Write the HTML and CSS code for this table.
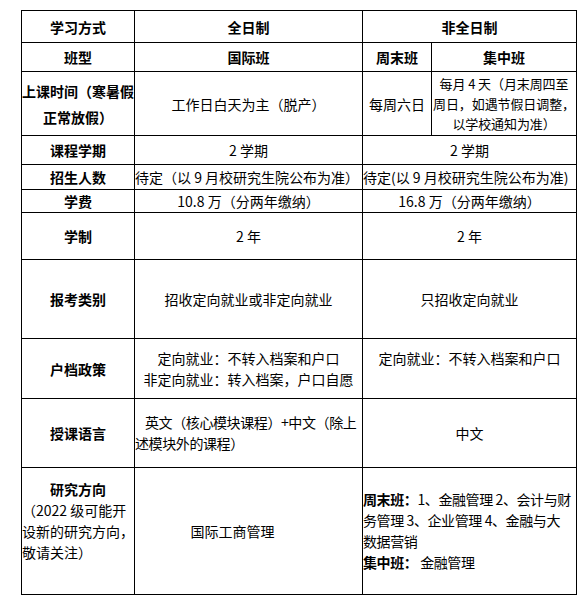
FILE: index.html
```html
<!DOCTYPE html>
<html lang="zh-CN">
<head>
<meta charset="utf-8">
<title>学习方式</title>
<link rel="stylesheet" href="styles.css">
</head>
<body>
<table class="plan">
  <colgroup>
    <col class="c-label">
    <col class="c-full">
    <col class="c-weekend">
    <col class="c-intensive">
  </colgroup>
  <tr class="h32">
    <td class="head">学习方式</td>
    <td class="head">全日制</td>
    <td class="head" colspan="2">非全日制</td>
  </tr>
  <tr class="h29">
    <td class="head">班型</td>
    <td class="head">国际班</td>
    <td class="head">周末班</td>
    <td class="head">集中班</td>
  </tr>
  <tr class="h64">
    <td class="head tall">上课时间（寒暑假<br>正常放假）</td>
    <td>工作日白天为主（脱产）</td>
    <td>每周六日</td>
    <td class="mid">每月 4 天（月末周四至<br>周日，如遇节假日调整，<br>以学校通知为准）</td>
  </tr>
  <tr class="h29">
    <td class="head">课程学期</td>
    <td>2 学期</td>
    <td colspan="2">2 学期</td>
  </tr>
  <tr class="h25">
    <td class="head">招生人数</td>
    <td class="left">待定（以 9 月校研究生院公布为准）</td>
    <td colspan="2" class="left">待定(以 9 月校研究生院公布为准)</td>
  </tr>
  <tr class="h23">
    <td class="head">学费</td>
    <td>10.8 万（分两年缴纳）</td>
    <td colspan="2">16.8 万（分两年缴纳）</td>
  </tr>
  <tr class="h47">
    <td class="head">学制</td>
    <td>2 年</td>
    <td colspan="2">2 年</td>
  </tr>
  <tr class="h79">
    <td class="head">报考类别</td>
    <td>招收定向就业或非定向就业</td>
    <td colspan="2">只招收定向就业</td>
  </tr>
  <tr class="h60">
    <td class="head">户档政策</td>
    <td class="lines">定向就业：不转入档案和户口<br>非定向就业：转入档案，户口自愿</td>
    <td colspan="2" class="lines">定向就业：不转入档案和户口<br>&nbsp;</td>
  </tr>
  <tr class="h69">
    <td class="head">授课语言</td>
    <td class="left lines tight"><div class="indent">英文（核心模块课程）+中文（除上</div><div>述模块外的课程）</div></td>
    <td colspan="2">中文</td>
  </tr>
  <tr class="h127">
    <td class="left lines research">
      <div class="head-line">研究方向</div>
      <div>（2022 级可能开</div>
      <div>设新的研究方向，</div>
      <div>敬请关注）</div>
    </td>
    <td class="offset">国际工商管理</td>
    <td colspan="2" class="left lines tight">
      <div><b>周末班：</b>1、金融管理 2、会计与财</div>
      <div>务管理 3、企业管理 4、金融与大</div>
      <div>数据营销</div>
      <div><b>集中班：</b> 金融管理</div>
    </td>
  </tr>
</table>
</body>
</html>
```

FILE: styles.css
```css
html, body {
  margin: 0;
  padding: 0;
  background: #fff;
}

body {
  font-family: "Noto Sans CJK SC", "Noto Sans", sans-serif;
  color: #000;
}

.plan {
  border-collapse: collapse;
  table-layout: fixed;
  width: 556px;
  margin: 10px 0 0 21px;
}

.c-label { width: 113px; }
.c-full { width: 228px; }
.c-weekend { width: 69px; }
.c-intensive { width: 145px; }

.plan td {
  border: 1px solid #000;
  padding: 0;
  text-align: center;
  vertical-align: middle;
  font-size: 14px;
  line-height: 20px;
  white-space: nowrap;
  overflow: hidden;
}

.plan td.head,
.head-line {
  font-weight: 700;
}

.plan td.tall { line-height: 26px; }
.plan td.mid {
  font-size: 13px;
  line-height: 20px;
  letter-spacing: -0.1px;
}
.plan td.lines { line-height: 21px; }
.plan td.left { text-align: left; }
.plan td.tight { letter-spacing: -0.4px; }

.indent { text-indent: 10px; }

.plan td.research { padding-bottom: 20px; }
.head-line { text-align: center; }

.plan td.offset { padding-right: 32px; }

.h32 { height: 32px; }
.h29 { height: 29px; }
.h64 { height: 64px; }
.h25 { height: 25px; }
.h23 { height: 23px; }
.h47 { height: 47px; }
.h79 { height: 79px; }
.h60 { height: 60px; }
.h69 { height: 69px; }
.h127 { height: 127px; }
```
